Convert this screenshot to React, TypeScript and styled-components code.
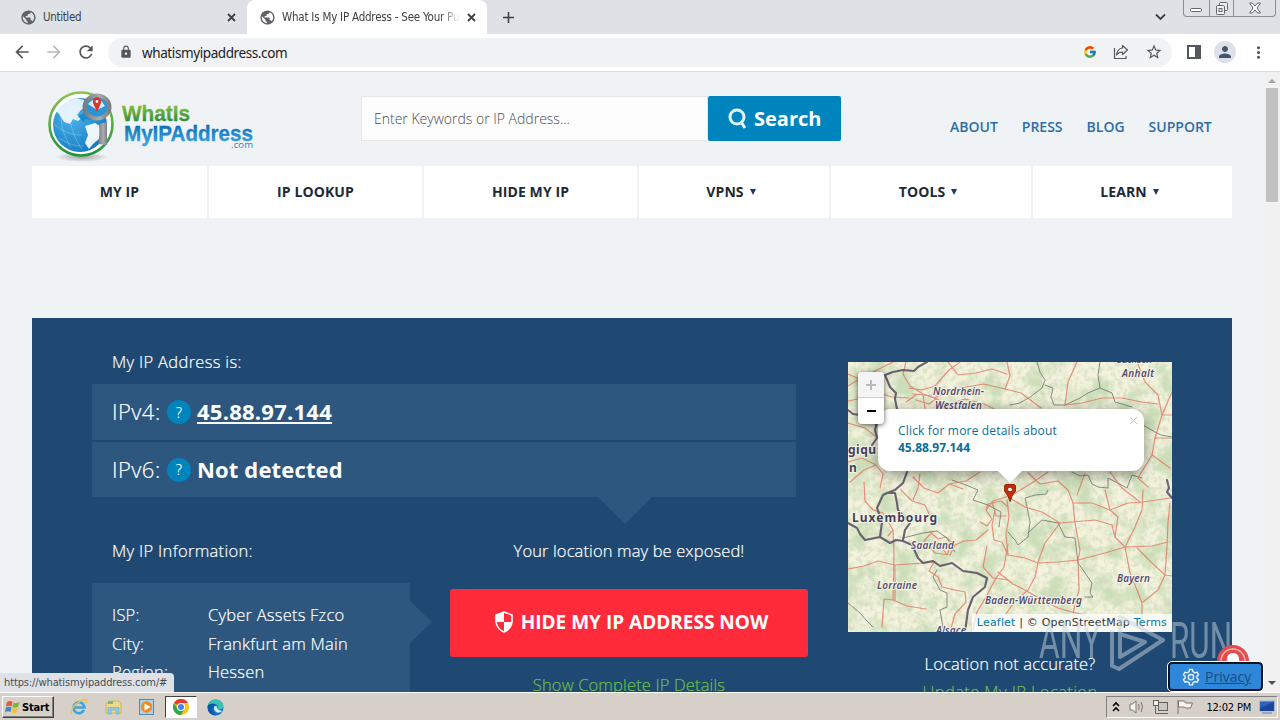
import React from 'react';
import styled, { createGlobalStyle } from 'styled-components';
import {
  MdAdd,
  MdArrowBack,
  MdArrowForward,
  MdLock,
  MdMoreVert,
  MdPerson,
  MdPublic,
  MdRefresh,
  MdStarBorder,
} from 'react-icons/md';
import { FcGoogle } from 'react-icons/fc';

const fontUi = `'DejaVu Sans Condensed', 'DejaVu Sans', sans-serif`;
const fontMain = `'Open Sans', 'Noto Sans', sans-serif`;

const GlobalStyle = createGlobalStyle`
  * {
    box-sizing: border-box;
  }
  body {
    margin: 0;
    overflow: hidden;
  }
  svg {
    display: block;
    flex-shrink: 0;
  }
`;

const Screen = styled.div`
  display: flex;
  flex-direction: column;
  width: 1280px;
  height: 720px;
  overflow: hidden;
  font-family: ${fontMain};
`;

/* Browser chrome */

const TabStrip = styled.div`
  display: flex;
  height: 34px;
  flex-shrink: 0;
  background: #dee1e6;
`;

const Tab = styled.div<{ $active?: boolean; $width: number }>`
  display: flex;
  align-items: center;
  width: ${props => props.$width}px;
  padding: 0 11px 0 ${props => (props.$active ? 12 : 20)}px;
  border-radius: 8px 8px 0 0;
  background: ${props => (props.$active ? '#fff' : 'transparent')};
  color: #3c4043;
`;

const TabTitle = styled.span<{ $spacing: number; $fade?: boolean }>`
  flex: 1;
  overflow: hidden;
  margin: 0 8px 0 6px;
  font: 11.5px ${fontUi};
  line-height: 16px;
  white-space: nowrap;
  letter-spacing: ${props => props.$spacing}px;
  ${props =>
    props.$fade &&
    'mask-image: linear-gradient(90deg, #000 158px, transparent 178px);'}
`;

const NewTab = styled.div`
  display: flex;
  align-items: center;
  margin-left: 12px;
  flex: 1;
  color: #3c4043;
`;

const TabSearch = styled.div`
  display: flex;
  align-items: center;
  margin-right: 17px;
  color: #3c4043;
`;

const WindowButtons = styled.div`
  display: flex;
  width: 93px;
  height: 17px;
  margin-right: 4px;
  border: 1px solid #8b8e95;
  border-top: 0;
  border-radius: 0 0 4px 4px;
`;

const WindowButton = styled.div<{ $width: number }>`
  display: flex;
  align-items: center;
  justify-content: center;
  width: ${props => props.$width}px;

  & + & {
    border-left: 1px solid #8b8e95;
  }
`;

const Toolbar = styled.div`
  display: flex;
  align-items: center;
  height: 38px;
  flex-shrink: 0;
  padding: 0 12px 1px 12px;
  border-bottom: 1px solid #d9dbde;
  background: #fff;
  color: #54575b;
`;

const NavIcons = styled.div`
  display: flex;
  gap: 12px;
  width: 96px;
`;

const AddressBar = styled.div`
  display: flex;
  align-items: center;
  width: 1064px;
  height: 29px;
  padding: 0 9px 0 11px;
  border-radius: 15px;
  background: #f0f2f4;
`;

const Url = styled.span`
  flex: 1;
  margin-left: 9px;
  padding-top: 1px;
  color: #202124;
  font: 13.5px 'Noto Sans', sans-serif;
  letter-spacing: -0.4px;
`;

const AddressActions = styled.div`
  display: flex;
  align-items: center;
  gap: 16px;
`;

const ToolbarActions = styled.div`
  display: flex;
  align-items: center;
  justify-content: space-between;
  flex: 1;
  margin-left: 15px;
`;

const Avatar = styled.div`
  display: flex;
  align-items: center;
  justify-content: center;
  width: 22px;
  height: 22px;
  border-radius: 50%;
  background: #dde2ea;
  color: #46546b;
`;

/* Page */

const Viewport = styled.div`
  position: relative;
  display: flex;
  height: 620px;
  flex-shrink: 0;
  overflow: hidden;
`;

const Page = styled.div`
  width: 1264px;
  height: 620px;
  overflow: hidden;
  padding: 0 32px;
  background: #f0f3f5;
`;

const Scrollbar = styled.div`
  display: flex;
  flex-direction: column;
  align-items: center;
  width: 16px;
  height: 620px;
  padding: 6px 0;
  background: #f1f1f1;
`;

const Thumb = styled.div`
  width: 12px;
  height: 114px;
  margin: 4px 0 auto;
  background: #c1c1c1;
`;

const Header = styled.header`
  display: flex;
  height: 94px;
`;

const LogoWrap = styled.div`
  width: 329px;
  padding: 14px 0 0 10px;
`;

const SearchForm = styled.div`
  display: flex;
  width: 480px;
  height: 45px;
  margin-top: 24px;
`;

const SearchInput = styled.div`
  display: flex;
  align-items: center;
  width: 347px;
  padding-left: 12px;
  border: 1px solid #e5e7e9;
  background: #fdfdfd;
  color: #4c4c4c;
  font-size: 14px;
  font-weight: 300;
`;

const SearchButton = styled.div`
  display: flex;
  align-items: center;
  width: 133px;
  gap: 7px;
  padding-left: 20px;
  border-radius: 2px;
  background: #0084bd;
  color: #fff;
  font-size: 20px;
  font-weight: 700;
`;

const TopLinks = styled.div`
  display: flex;
  gap: 24px;
  margin: 45px 0 0 109px;
  color: #2f6da6;
  font-size: 14px;
  font-weight: 600;
  line-height: 20px;
  white-space: nowrap;
`;

const MainNav = styled.nav`
  display: grid;
  grid-template-columns: 175px 213px 213px 190px 200px 199px;
  gap: 2px;
  height: 52px;
`;

const NavItem = styled.div<{ $menu?: boolean }>`
  display: flex;
  align-items: center;
  justify-content: center;
  gap: 6px;
  padding: 0 ${props => (props.$menu ? 6 : 0)}px 2px 0;
  background: #fff;
  color: #1c2936;
  font-size: 14px;
  font-weight: 700;
  letter-spacing: 0.1px;
`;

const Caret = styled.i`
  margin-top: 1px;
  border: 3px solid transparent;
  border-top: 6px solid #1f3a5c;
  border-bottom: 0;
`;

const Hero = styled.main`
  display: flex;
  gap: 40px;
  height: 374px;
  margin-top: 100px;
  padding: 32px 60px 0;
  background: #1f4972;
  color: #fff;
  font-weight: 300;
  -webkit-text-stroke: 0.2px;
`;

const Details = styled.section`
  width: 716px;
`;

const Heading = styled.div`
  height: 24px;
  padding-left: 20px;
  font-size: 16.5px;
  line-height: 24px;
  white-space: nowrap;
  letter-spacing: 0.32px;
`;

const Warning = styled.div`
  height: 24px;
  font-size: 16.5px;
  line-height: 24px;
  white-space: nowrap;
  letter-spacing: 0.12px;
`;

const IpList = styled.div`
  display: flex;
  flex-direction: column;
  gap: 2px;
  width: 704px;
  margin: 10px 0 42px;
`;

const IpRow = styled.div`
  display: flex;
  align-items: center;
  height: 56px;
  padding-left: 20px;
  background: #2d577e;
  font-size: 22px;

  & + & {
    height: 55px;
  }
`;

const IpLabel = styled.span`
  width: 55px;
  padding-bottom: 2px;
  letter-spacing: 0.45px;
`;

const Help = styled.span`
  display: flex;
  align-items: center;
  justify-content: center;
  width: 24px;
  height: 24px;
  margin-right: 6px;
  border-radius: 50%;
  background: #0084bd;
  font-size: 14px;
`;

const IpValue = styled.span<{ $link?: boolean }>`
  margin-bottom: ${props => (props.$link ? '1px' : '2px')};
  font-size: 22px;
  font-weight: 700;
  line-height: ${props => (props.$link ? '22px' : '24px')};
  letter-spacing: ${props => (props.$link ? 0.25 : 0.15)}px;
  border-bottom: ${props => (props.$link ? '2px solid #fff' : '0')};
  -webkit-text-stroke: 0;
`;

const Columns = styled.div`
  display: flex;
  gap: 40px;
`;

const Info = styled.div`
  width: 318px;
`;

const InfoTable = styled.div`
  position: relative;
  display: grid;
  grid-template-columns: 96px auto;
  align-content: start;
  height: 140px;
  margin-top: 20px;
  padding: 18px 20px;
  background: #2d577e;
  font-size: 16.5px;
  line-height: 28.5px;
  letter-spacing: 0.22px;
`;

const Arrow = styled.i<{ $down?: boolean }>`
  position: absolute;
  left: ${props => (props.$down ? '148px' : '318px')};
  top: ${props => (props.$down ? '-42px' : '18px')};
  border: ${props => (props.$down ? '27px' : '21px')} solid transparent;
  ${props =>
    props.$down
      ? 'border-top-color: #2d577e; border-bottom: 0;'
      : 'border-left: 22px solid #2d577e; border-right: 0;'}
`;

const Action = styled.div`
  position: relative;
  display: flex;
  flex-direction: column;
  align-items: center;
  width: 358px;
`;

const HideButton = styled.div`
  display: flex;
  align-items: center;
  justify-content: center;
  gap: 8px;
  width: 358px;
  height: 68px;
  margin: 26px 0 16px;
  padding: 0 0 2px 5px;
  border-radius: 3px;
  background: #ff2a3a;
  font-size: 19px;
  font-weight: 700;
  -webkit-text-stroke: 0;
`;

const GreenLink = styled.a<{ $spacing: number }>`
  color: #6cbf4b;
  font-size: 16.5px;
  line-height: 24px;
  text-decoration: underline;
  white-space: nowrap;
  letter-spacing: ${props => props.$spacing}px;
`;

const MapColumn = styled.aside`
  display: flex;
  flex-direction: column;
  align-items: center;
  width: 324px;
  padding-top: 12px;
  font-size: 16.5px;
  line-height: 28px;
`;

const Question = styled.span`
  margin-bottom: 2px;
  letter-spacing: 0.14px;
`;

const MapFrame = styled.div`
  position: relative;
  width: 324px;
  height: 270px;
  flex-shrink: 0;
  margin-bottom: 18px;
  overflow: hidden;
  -webkit-text-stroke: 0;
`;

const ZoomControl = styled.div`
  position: absolute;
  left: 10px;
  top: 10px;
  width: 26px;
  border-radius: 4px;
  background: #fff;
  box-shadow: 0 1px 5px rgba(0, 0, 0, 0.65);
`;

const ZoomButton = styled.div<{ $disabled?: boolean }>`
  display: flex;
  align-items: center;
  justify-content: center;
  height: 26px;
  border-radius: 4px 4px 0 0;
  border-bottom: ${props => (props.$disabled ? '1px solid #ccc' : '0')};
  background: ${props => (props.$disabled ? '#f4f4f4' : 'transparent')};
  color: ${props => (props.$disabled ? '#bbb' : '#000')};
`;

const Popup = styled.div`
  position: absolute;
  left: 30px;
  top: 47px;
  width: 266px;
  height: 62px;
  padding: 13px 20px;
  border-radius: 12px;
  background: #fff;
  box-shadow: 0 3px 14px rgba(0, 0, 0, 0.4);
  color: #0a6e97;
  font-size: 12px;
  font-weight: 400;
  line-height: 17px;
  letter-spacing: 0.18px;

  b {
    letter-spacing: 0;
  }

  &::after {
    content: '';
    position: absolute;
    left: 120px;
    top: 62px;
    border: 12px solid transparent;
    border-top-color: #fff;
    border-bottom: 0;
  }
`;

const PopupClose = styled.div`
  position: absolute;
  right: 6px;
  top: 7px;
  color: #c3c3c3;
`;

const Pin = styled.div`
  position: absolute;
  left: 156px;
  top: 122px;
`;

const Attribution = styled.div`
  position: absolute;
  right: 0;
  bottom: 0;
  height: 18px;
  padding: 0 5px;
  background: rgba(255, 255, 255, 0.75);
  color: #333;
  font: 11px/18px 'DejaVu Sans', sans-serif;
  letter-spacing: 0.18px;
  white-space: nowrap;

  span {
    color: #0078a8;
  }
`;

const Watermark = styled.div`
  position: absolute;
  left: 1036px;
  top: 538px;
`;

const Bell = styled.div`
  position: absolute;
  left: 1216px;
  top: 572px;
`;

const Privacy = styled.div`
  position: absolute;
  left: 1168px;
  top: 590px;
  display: flex;
  align-items: center;
  gap: 5px;
  width: 95px;
  height: 29px;
  padding-left: 12px;
  border: 2px solid #0b1220;
  border-radius: 4px;
  outline: 1px solid #fff;
  background: #2f87d9;
  color: #1c4a80;
  font-size: 14px;
  text-decoration: underline;
`;

const StatusBubble = styled.div`
  position: absolute;
  left: 0;
  bottom: 0;
  width: 174px;
  height: 19px;
  padding-left: 4px;
  border-radius: 0 4px 0 0;
  background: #dee1e6;
  color: #4a4d51;
  font: 11px/20px ${fontUi};
  letter-spacing: -0.12px;
  white-space: nowrap;
`;

/* Taskbar */

const Taskbar = styled.footer`
  display: flex;
  align-items: center;
  height: 28px;
  padding: 1px 2px 0;
  border-top: 1px solid #fff;
  background: #d6d0c8;
`;

const StartButton = styled.div`
  display: flex;
  align-items: center;
  gap: 2px;
  width: 52px;
  height: 22px;
  padding-left: 2px;
  border: 1px solid;
  border-color: #fff #404040 #404040 #fff;
  box-shadow: inset -1px -1px #808080;
  color: #000;
  font: bold 11px ${fontUi};
  letter-spacing: -0.15px;
`;

const QuickLaunch = styled.div`
  display: flex;
  flex: 1;
  align-items: center;
  margin-left: 8px;
`;

const TaskIcon = styled.div<{ $active?: boolean }>`
  display: flex;
  align-items: center;
  justify-content: center;
  width: ${props => (props.$active ? 32 : 34)}px;
  height: 22px;
  margin: 0 ${props => (props.$active ? 1 : 0)}px;
  border: 1px solid;
  border-color: ${props =>
    props.$active ? '#404040 #fff #fff #404040' : 'transparent'};
  background: ${props => (props.$active ? '#fff' : 'transparent')};
`;

const Tray = styled.div`
  display: flex;
  align-items: center;
  width: 172px;
  height: 22px;
  padding: 0 2px 0 5px;
  border: 1px solid;
  border-color: #808080 #fff #fff #808080;
`;

const TrayIcons = styled.div`
  display: flex;
  gap: 8px;
  margin-left: 9px;
`;

const Clock = styled.span`
  margin: 0 8px 0 auto;
  color: #000;
  font: 11px ${fontUi};
  letter-spacing: -0.2px;
  white-space: nowrap;
`;

const CloseIcon = () => (
  <svg width='9' height='9' fill='none' stroke='#3c4043' strokeWidth='1.8'>
    <path d='M1 1 L8 8 M8 1 L1 8' />
  </svg>
);

const Logo = () => (
  <svg width='215' height='80' viewBox='0 0 215 80'>
    <defs>
      <linearGradient id='ring' x1='0' y1='0' x2='0' y2='1'>
        <stop offset='0' stopColor='#8cc152' />
        <stop offset='1' stopColor='#1e9440' />
      </linearGradient>
      <radialGradient id='sea' cx='.35' cy='.35' r='.8'>
        <stop offset='0' stopColor='#4eb4ea' />
        <stop offset='1' stopColor='#0c74bd' />
      </radialGradient>
      <linearGradient id='greenText' x1='0' y1='0' x2='0' y2='1'>
        <stop offset='.2' stopColor='#7fb93c' />
        <stop offset='.8' stopColor='#2f8f3c' />
      </linearGradient>
      <linearGradient id='blueText' x1='0' y1='0' x2='0' y2='1'>
        <stop offset='.2' stopColor='#0b6fb8' />
        <stop offset='.9' stopColor='#3ba3e0' />
      </linearGradient>
      <linearGradient id='steel'>
        <stop offset='0' stopColor='#777a80' />
        <stop offset='.6' stopColor='#a9abb0' />
        <stop offset='1' stopColor='#7c7e83' />
      </linearGradient>
      <radialGradient id='shade'>
        <stop offset='0' stopColor='#777' stopOpacity='.65' />
        <stop offset='1' stopColor='#777' stopOpacity='0' />
      </radialGradient>
    </defs>
    <ellipse cx='40' cy='71' rx='26' ry='5' fill='url(#shade)' />
    <circle cx='39' cy='38' r='31.5' fill='#fff' stroke='url(#ring)' strokeWidth='2.6' />
    <circle cx='38' cy='39' r='27' fill='url(#sea)' />
    <path
      d='M14 25 L22 16 L34 12 L42 14 L45 20 L39 24 L35 29 L40 32 L36 35 L31 33 L28 38 L22 36 L17 28Z'
      fill='#fff'
      opacity='.85'
    />
    <path d='M43 40 L53 37 L61 42 L58 52 L51 58 L47 63 L43 57 L46 49Z' fill='#fff' opacity='.92' />
    <path d='M36 30 l6 -3 l4 3 l5 1 l-2 3 l-5 -1 l-3 3z' fill='#168bd0' />
    <path
      d='M12 38 Q26 50 40 49 M17 52 Q30 61 42 60 M20 22 Q16 42 29 62 M29 17 Q24 40 40 64'
      fill='none'
      stroke='#fff'
      strokeOpacity='.35'
      strokeWidth='.7'
    />
    <path d='M57 38 l8 -2 v23 l-9 -1 q2 -8 1 -20z' fill='url(#steel)' />
    <ellipse cx='55' cy='21' rx='12.500' ry='11.500' fill='#2c93d4' stroke='url(#steel)' strokeWidth='4' />
    <path d='M46 18 q7 -7 12 -5 l5 7 l-8 4z' fill='#d7effa' />
    <path d='M55 26 l-4 -9 q-1 -5 4 -6 q5 1 4 6z' fill='#e0312c' />
    <circle cx='55' cy='15.500' r='1.4' fill='#fff' />
    <text
      x='80'
      y='35'
      textLength='68'
      lengthAdjust='spacingAndGlyphs'
      fill='url(#greenText)'
      stroke='url(#greenText)'
      strokeWidth='.3'
      fontFamily='Liberation Sans, sans-serif'
      fontSize='21.5'
      fontWeight='700'
    >
      WhatIs
    </text>
    <text
      x='82'
      y='54.500'
      textLength='129'
      lengthAdjust='spacingAndGlyphs'
      fill='url(#blueText)'
      stroke='url(#blueText)'
      strokeWidth='.3'
      fontFamily='Liberation Sans, sans-serif'
      fontSize='22.5'
      fontWeight='700'
    >
      MyIPAddress
    </text>
    <text x='189' y='61.5' textLength='22' fill='#1b82c5' fontFamily={fontMain} fontSize='9.5'>
      .com
    </text>
  </svg>
);

// path data for the map layers, in map pixels
const motorways = [
  'M159 138 L161 155 L158 172 L160 193 L177 196 L190 201 L210 200 L230 198 L257 191 L277 185 L304 184 L320 180',
  'M190 201 L187 215 L180 228 L166 240 L158 252',
  'M190 200 L197 181 L212 161 L224 160 L247 158 L264 163 L267 175 L277 185',
  'M220 128 L225 141 L227 161 L232 188 L230 198 L231 228 L225 251',
  'M225 141 L244 141 L262 148 L280 141 L295 140 L322 136',
  'M257 128 L262 148 L270 155 L267 175',
  'M295 128 L294 148 L287 165 L277 185 L282 211 L289 228 L294 241 L294 270',
  'M289 186 L304 201 L317 213 L324 214 M317 213 L310 228 L295 240',
  'M322 141 L320 160 L319 185 L317 213',
  'M150 210 L165 222 L177 228 L194 238 L210 246 L224 250 L237 253',
  'M160 135 L177 145 L194 150 L212 161',
  'M229 0 L220 20 L217 43 L234 41 L254 36 L274 36 L294 40 L310 42',
  'M289 0 L297 20 L310 33 L314 53 L307 76 L304 93 L290 116',
  'M324 30 L314 53 L324 53 M307 76 L324 76 M304 93 L322 106',
  'M200 110 L184 121 L164 133 L145 139 L138 148',
  'M237 111 L229 133 M262 110 L274 126 L292 140 M290 116 L300 125',
  'M180 111 L192 122 L210 119 L220 128',
  'M159 0 L162 14 L157 27 L173 31 L193 46',
  'M0 24 L15 15 L35 5 L45 0 M0 12 L14 18 L30 31 L44 35 L61 36',
  'M58 0 L55 12 L62 24 L75 32 L86 36 L101 29 L118 25 L136 22 L157 27',
  'M61 26 L74 28 L87 24 L101 8 L112 0 M75 32 L77 47',
  'M65 32 L85 34 L94 31 M68 38 L81 42 L89 36 M58 40 L68 33',
  'M86 36 L100 42 L117 37 L136 42 L148 48',
  'M100 0 L110 13 L128 11 L144 7 L159 12',
  'M0 39 L14 36 L24 46 L30 62 M0 61 L17 66 L27 74',
  'M0 100 L14 96 L28 103 L35 112 L32 126 M2 120 L16 108 L28 103',
  'M16 120 L17 139 L25 148 L35 151 L45 168 L46 190 L45 238',
  'M65 115 L76 126 L90 131 L101 122 L118 119 L132 110 M101 122 L115 127',
  'M53 128 L64 139 L77 143 L82 154 M72 112 L70 126 L65 138',
  'M0 207 L16 204 L30 199 L47 203 L75 201 L86 200 M45 168 L40 174',
  'M46 238 L36 237 L34 265 M45 238 L59 244 L78 247 M47 203 L47 238',
  'M82 170 L90 177 L98 175 L107 183 L116 179 L128 178 L140 168 M84 170 L76 179 L87 191 L102 193 L107 183 M79 182 L91 181 L99 193 L104 180',
  'M86 200 L81 209 L90 215 L94 225 L107 228 L117 230 L118 240 L107 252 L102 270',
  'M138 148 L140 142 L153 139 L160 145 M144 140 L148 154 L158 154 M138 148 L144 157 L139 164 L132 160',
  'M147 148 L144 163 L146 178 L154 180 L160 193 M139 184 L135 205 L145 216 L160 218',
  'M160 182 L156 205 L148 216 L138 235 L129 250 L125 268',
];

const borders = [
  'M79 0 L70 5 L66 9 L55 8 L45 10 L37 13 L42 25 L48 31 L47 37 L49 47 L55 55',
  'M0 48 L5 52 L12 53 M29 60 L27 68 L29 76 L24 83',
  'M59 110 L55 121 L47 128 L39 131 L35 133 L29 146 L34 160 L32 175',
  'M39 131 L47 131 L49 141 L50 148 L62 161 L57 168 L55 178',
  'M0 161 L9 166 L12 172 L17 178 L32 175 L42 181 L48 178 L55 179 L64 183 L70 196 L75 201 L85 199 L92 204 L104 201 L115 209 L129 211 L139 216 L137 225 L125 235 L120 248 L117 270',
  'M319 118 L321 126 L319 130 L324 136',
];

const stateLines = [
  'M189 0 L192 10 L197 18 L194 26 L182 35 L172 41 L162 43',
  'M197 23 L205 26 L203 35 L206 43 L217 43 L232 36 L240 31 L252 26 L250 13 L252 0',
  'M252 26 L264 31 L267 40 L284 45 M295 63 L307 70 L313 73 L324 75',
  'M224 110 L232 114 L240 113 L244 122 L250 125 L260 126 L260 116 L279 126 L284 113 L294 116',
  'M200 128 L198 132 L187 133 L177 136 L179 145 L182 160 L180 175 L170 183 L167 178 L160 170',
  'M180 171 L194 158 L210 161 L217 175 L227 176 L230 201 L235 208 L244 221 L242 231 L245 235 L237 235',
  'M0 241 L12 251 L18 258 L25 265',
  'M89 208 L85 215 L92 228 L99 231 L99 245 L92 248 L95 265',
  'M55 176 L75 171 L89 169 L99 176 L107 190',
  'M104 118 L118 123 L130 128 L125 138 L140 143 L153 150 L151 165',
];

const MapTiles = () => (
  <svg width='324' height='270' viewBox='0 0 324 270'>
    <defs>
      <filter id='forest' x='0' y='0' width='100%' height='100%' colorInterpolationFilters='sRGB'>
        <feTurbulence type='fractalNoise' baseFrequency='.045' numOctaves='5' seed='8' />
        <feColorMatrix values='0 0 0 0 .7  0 0 0 0 .83  0 0 0 0 .64  0 3.5 0 0 -1.5' />
      </filter>
      <filter id='fields' x='0' y='0' width='100%' height='100%' colorInterpolationFilters='sRGB'>
        <feTurbulence type='fractalNoise' baseFrequency='.2' numOctaves='3' seed='3' />
        <feColorMatrix values='0 0 0 0 .8  0 0 0 0 .85  0 0 0 0 .73  0 0 5 0 -2.3' />
      </filter>
    </defs>
    <rect width='324' height='270' fill='#f3f2dc' />
    <rect width='324' height='270' filter='url(#forest)' opacity='.6' />
    <rect width='324' height='270' filter='url(#fields)' opacity='.5' />
    <g fill='none' strokeLinejoin='round' strokeLinecap='round'>
      <g stroke='#555d58' strokeWidth='.9' opacity='.75'>
        {stateLines.map(d => (
          <path key={d} d={d} />
        ))}
      </g>
      <g stroke='#e5705e' strokeWidth='1.2' opacity='.75'>
        {motorways.map(d => (
          <path key={d} d={d} />
        ))}
      </g>
      <g stroke='#5d5468' strokeWidth='2.1' opacity='.9'>
        {borders.map(d => (
          <path key={d} d={d} />
        ))}
      </g>
    </g>
    <g
      fill='#534a70'
      stroke='#f4f5e4'
      strokeWidth='2'
      paintOrder='stroke'
      fontFamily='Noto Sans, sans-serif'
      fontStyle='italic'
      fontWeight='600'
      fontSize='10'
    >
      <text x='85' y='33' textLength='51'>Nordrhein-</text>
      <text x='87' y='47' textLength='47'>Westfalen</text>
      <text x='269' y='1' textLength='38'>Sachsen-</text>
      <text x='274' y='15' textLength='32'>Anhalt</text>
      <text x='63' y='187' textLength='43'>Saarland</text>
      <text x='29' y='227' textLength='40'>Lorraine</text>
      <text x='269' y='220' textLength='33'>Bayern</text>
      <text x='137' y='242' textLength='97'>Baden-Württemberg</text>
      <text x='88' y='272' textLength='30'>Alsace</text>
    </g>
    <g
      fill='#463e60'
      stroke='#f4f5e4'
      strokeWidth='2'
      paintOrder='stroke'
      fontFamily='Noto Sans, sans-serif'
      fontWeight='700'
      fontSize='12'
    >
      <text x='4' y='160' textLength='85'>Luxembourg</text>
      <text x='0' y='92' textLength='28'>giqu</text>
      <text x='1' y='110'>n</text>
    </g>
  </svg>
);

const LocationMap = () => (
  <MapFrame>
    <MapTiles />
    <Pin>
      <svg width='12' height='18' viewBox='0 0 12 18'>
        <path d='M1.500 .5 h9 l1 1.500 v5 l-3.500 5 l-2 5.500 l-2 -5.500 l-3.500 -5 v-5z' fill='#cc2b0c' stroke='#992208' />
        <circle cx='6' cy='5.500' r='2.400' fill='#fff' stroke='#8a1f05' />
      </svg>
    </Pin>
    <Popup>
      Click for more details about
      <br />
      <b>45.88.97.144</b>
      <PopupClose>
        <svg width='9' height='9' viewBox='0 0 9 9' stroke='currentColor'>
          <path d='M1 1 L8 8 M8 1 L1 8' />
        </svg>
      </PopupClose>
    </Popup>
    <ZoomControl>
      <ZoomButton $disabled>
        <svg width='10' height='10' stroke='currentColor' strokeWidth='2'>
          <path d='M5 0 V10 M0 5 H10' />
        </svg>
      </ZoomButton>
      <ZoomButton>
        <svg width='10' height='10' stroke='currentColor' strokeWidth='2'>
          <path d='M1 5 H10' />
        </svg>
      </ZoomButton>
    </ZoomControl>
    <Attribution>
      <span>Leaflet</span> | © OpenStreetMap <span>Terms</span>
    </Attribution>
  </MapFrame>
);

const navItems = [
  { label: 'MY IP' },
  { label: 'IP LOOKUP' },
  { label: 'HIDE MY IP' },
  { label: 'VPNS', menu: true },
  { label: 'TOOLS', menu: true },
  { label: 'LEARN', menu: true },
];

const Browser = () => (
  <>
    <TabStrip>
      <Tab $width={247}>
        <MdPublic size={17} color='#5f6368' />
        <TabTitle $spacing={-0.35}>Untitled</TabTitle>
        <CloseIcon />
      </Tab>
      <Tab $width={240} $active>
        <MdPublic size={17} color='#5f6368' />
        <TabTitle $spacing={-0.22} $fade>
          What Is My IP Address - See Your Public
        </TabTitle>
        <CloseIcon />
      </Tab>
      <NewTab>
        <MdAdd size={19} />
      </NewTab>
      <TabSearch>
        <svg width='11' height='8' fill='none' stroke='currentColor' strokeWidth='1.8'>
          <path d='M1 1.500 L5.500 6 L10 1.500' />
        </svg>
      </TabSearch>
      <WindowButtons>
        <WindowButton $width={25}>
          <svg width='14' height='16' fill='#fff' stroke='#62666d'>
            <rect x='1.5' y='8.5' width='11' height='3' rx='1' />
          </svg>
        </WindowButton>
        <WindowButton $width={25}>
          <svg width='14' height='15' fill='#eef0f3' stroke='#62666d'>
            <rect x='4.5' y='1.5' width='8' height='8' rx='1' />
            <rect x='1.5' y='4.5' width='8' height='9' rx='1' />
            <rect x='4' y='7.5' width='3' height='3' />
          </svg>
        </WindowButton>
        <WindowButton $width={42}>
          <svg width='14' height='14' fill='#fff' stroke='#62666d'>
            <path d='M1.5 2 h3 l2.5 3 l2.5 -3 h3 l-3.5 5 l3.5 5 h-3 l-2.5 -3 l-2.5 3 h-3 l3.5 -5z' />
          </svg>
        </WindowButton>
      </WindowButtons>
    </TabStrip>
    <Toolbar>
      <NavIcons>
        <MdArrowBack size={20} />
        <MdArrowForward size={20} color='#b6b8ba' />
        <MdRefresh size={20} />
      </NavIcons>
      <AddressBar>
        <MdLock size={14} />
        <Url>whatismyipaddress.com</Url>
        <AddressActions>
          <FcGoogle size={14} />
          <svg width='16' height='16' fill='none' stroke='currentColor' strokeWidth='1.2'>
            <path d='M1.5 4 V14.5 H13 V12' />
            <path d='M9.5 1.5 L14.5 6 L9.5 10.5 V8 Q5.5 8 3.5 11 Q4.5 4.5 9.5 4z' strokeLinejoin='round' />
          </svg>
          <MdStarBorder size={18} />
        </AddressActions>
      </AddressBar>
      <ToolbarActions>
        <svg width='14' height='14' fill='none' stroke='currentColor' strokeWidth='2'>
          <rect x='1' y='1' width='12' height='12' />
          <rect x='9' y='1' width='4' height='12' fill='currentColor' />
        </svg>
        <Avatar>
          <MdPerson size={18} />
        </Avatar>
        <MdMoreVert size={19} />
      </ToolbarActions>
    </Toolbar>
  </>
);

const Website = () => (
  <Page>
    <Header>
      <LogoWrap>
        <Logo />
      </LogoWrap>
      <SearchForm>
        <SearchInput>Enter Keywords or IP Address...</SearchInput>
        <SearchButton>
          <svg width='19' height='22' fill='none' stroke='#e4f6fd' strokeWidth='3'>
            <circle cx='9' cy='9' r='7' />
            <path d='M13 14 L17 20' />
          </svg>
          Search
        </SearchButton>
      </SearchForm>
      <TopLinks>
        <span>ABOUT</span>
        <span>PRESS</span>
        <span>BLOG</span>
        <span>SUPPORT</span>
      </TopLinks>
    </Header>
    <MainNav>
      {navItems.map(item => (
        <NavItem key={item.label} $menu={item.menu}>
          {item.label}
          {item.menu && <Caret />}
        </NavItem>
      ))}
    </MainNav>
    <Hero>
      <Details>
        <Heading>My IP Address is:</Heading>
        <IpList>
          <IpRow>
            <IpLabel>IPv4:</IpLabel>
            <Help>?</Help>
            <IpValue $link>45.88.97.144</IpValue>
          </IpRow>
          <IpRow>
            <IpLabel>IPv6:</IpLabel>
            <Help>?</Help>
            <IpValue>Not detected</IpValue>
          </IpRow>
        </IpList>
        <Columns>
          <Info>
            <Heading>My IP Information:</Heading>
            <InfoTable>
              <span>ISP:</span>
              <span>Cyber Assets Fzco</span>
              <span>City:</span>
              <span>Frankfurt am Main</span>
              <span>Region:</span>
              <span>Hessen</span>
              <Arrow />
            </InfoTable>
          </Info>
          <Action>
            <Arrow $down />
            <Warning>Your location may be exposed!</Warning>
            <HideButton>
              <svg width='18' height='22' viewBox='0 0 18 22'>
                <path d='M9 1 L17 4 V11 Q16 18 9 21 Q2 18 1 11 V4Z' fill='none' stroke='#fff' strokeWidth='1.6' />
                <path d='M9 1 L1 4 V11 H9Z M9 11 H17 Q16 18 9 21Z' fill='#fff' />
              </svg>
              HIDE MY IP ADDRESS NOW
            </HideButton>
            <GreenLink $spacing={0.15}>Show Complete IP Details</GreenLink>
          </Action>
        </Columns>
      </Details>
      <MapColumn>
        <LocationMap />
        <Question>Location not accurate?</Question>
        <GreenLink $spacing={0.4}>Update My IP Location</GreenLink>
      </MapColumn>
    </Hero>
  </Page>
);

const WindowsTaskbar = () => (
  <Taskbar>
    <StartButton>
      <svg width='15' height='14' viewBox='0 0 15 14'>
        <path d='M2 2 Q5 0 7.500 2 L6.500 6.500 Q4 5 1 6.500Z' fill='#e8562a' />
        <path d='M8.500 2.500 Q11 4 14.500 2 L13 7 Q10 8.500 7.500 7Z' fill='#7cb53a' />
        <path d='M1 7.500 Q4 6 6.500 7.500 L5.500 12 Q3 10.500 0 12Z' fill='#3b84d3' />
        <path d='M7.500 8 Q10 9.500 13 8 L11.500 12.500 Q9 14 6.500 12.500Z' fill='#f5c12c' />
      </svg>
      Start
    </StartButton>
    <QuickLaunch>
      <TaskIcon>
        <svg width='18' height='18' viewBox='0 0 18 18' fill='none'>
          <path d='M14 12 A5.500 5.500 0 1 1 14.500 9.500 H5' stroke='#3ca4df' strokeWidth='2.600' />
          <path d='M2 16 Q-1 13 6 6 Q14 0 16.500 2 Q17.500 3 16 5.500' stroke='#efc345' strokeWidth='1.400' />
        </svg>
      </TaskIcon>
      <TaskIcon>
        <svg width='17' height='16' viewBox='0 0 17 16'>
          <path d='M1 4 h4 l1 -2 h8 l2 3 v9 H1Z' fill='#f1d98a' stroke='#d2b45c' />
          <path d='M3 2 h5 v3 H3z' fill='#7fb86b' />
          <path d='M3 15 V8.500 H14 V15 H11 V11 H6 V15Z' fill='#8fcbe9' stroke='#65a7cb' strokeWidth='.6' />
        </svg>
      </TaskIcon>
      <TaskIcon>
        <svg width='16' height='16' viewBox='0 0 16 16'>
          <rect x='.5' y='.5' width='14' height='15' fill='#a8d2ee' stroke='#4a8dbd' />
          <circle cx='7.500' cy='8' r='5.700' fill='#f28a1c' />
          <path d='M5.500 4.500 L11.500 8 L5.500 11.500Z' fill='#fff' />
        </svg>
      </TaskIcon>
      <TaskIcon $active>
        <svg width='16' height='16' viewBox='0 0 16 16'>
          <circle cx='8' cy='8' r='8' fill='#fbc116' />
          <path d='M8 8 L1.070 4 A8 8 0 0 1 14.930 4 H8Z' fill='#e33b2e' />
          <path d='M8 8 L4.540 10 L1.070 4 A8 8 0 0 0 8 16 L11.460 10Z' fill='#2da94f' />
          <circle cx='8' cy='8' r='4' fill='#fff' />
          <circle cx='8' cy='8' r='3' fill='#4285f4' />
        </svg>
      </TaskIcon>
      <TaskIcon>
        <svg width='17' height='17' viewBox='0 0 17 17'>
          <circle cx='8.500' cy='8.500' r='8' fill='#1470c4' />
          <path d='M.6 8 Q1 1 8.500 .5 Q16 1 16.500 7 Q16 11 11 10.500 Q12 7 8.500 5 Q4 3.500 .6 8Z' fill='#39c1b5' />
          <path d='M7 8 Q8 6.500 10 7.500 Q9.500 11 15.500 12 Q12 15 9 13 Q6.500 11 7 8Z' fill='#d6e7ee' />
          <path d='M1 6 Q5 3 9 6 Q4 7 5.500 12 Q6.500 15.500 9 16.500 Q1 16 .5 8Z' fill='#0c59a4' />
        </svg>
      </TaskIcon>
    </QuickLaunch>
    <Tray>
      <svg width='8' height='14' fill='none' stroke='#000' strokeWidth='1.600'>
        <path d='M1 6 L4 3 L7 6 M1 11 L4 8 L7 11' />
      </svg>
      <TrayIcons>
        <svg width='16' height='16' fill='#f5f3ef' stroke='#77746f'>
          <path d='M1 5 H3.500 L7 2 V14 L3.500 11 H1Z' />
          <path d='M9.500 5 Q11 8 9.500 11 M12 3 Q15 8 12 13' fill='none' />
        </svg>
        <svg width='16' height='16' fill='#f1efea' stroke='#66635e'>
          <rect x='5.500' y='3.500' width='9' height='8' fill='#c9c8c4' />
          <path d='M5 14.500 H15 M2.500 7 V14.500 H6' fill='none' />
          <rect x='.5' y='1.500' width='5' height='5' />
        </svg>
        <svg width='17' height='16' fill='#f7f5f1' stroke='#77746f'>
          <path d='M1 1 V15' />
          <path d='M1.500 2 H7.500 L8.500 4 H15.500 L13.500 9 H8.500 L7.500 8 H1.500Z' />
        </svg>
      </TrayIcons>
      <Clock>12:02 PM</Clock>
      <svg width='16' height='15' viewBox='0 0 16 15'>
        <rect x='.5' y='1' width='15' height='10' fill='#2c62bd' stroke='#9fb7de' />
        <path d='M1 8 L15 2 V11 H1Z' fill='#1b4796' />
        <path d='M3 13 h10' stroke='#5d82bf' />
      </svg>
    </Tray>
  </Taskbar>
);

export default function App() {
  return (
    <Screen>
      <GlobalStyle />
      <Browser />
      <Viewport>
        <Website />
        <Scrollbar>
          <svg width='8' height='6'>
            <path d='M0 5 L4 1 L8 5Z' fill='#a3a3a3' />
          </svg>
          <Thumb />
          <svg width='8' height='6'>
            <path d='M0 1 L4 5 L8 1Z' fill='#505050' />
          </svg>
        </Scrollbar>
        <Watermark>
          <svg width='200' height='70' opacity='.5'>
            <g fill='#c9d3de' fontFamily='Roboto, sans-serif' fontSize='50' fontWeight='400'>
              <text x='3' y='48' textLength='62' lengthAdjust='spacingAndGlyphs'>ANY</text>
              <text x='134' y='48' textLength='62' lengthAdjust='spacingAndGlyphs'>RUN</text>
            </g>
            <path
              d='M84 35 V7 L127 30 L83 59 L76 56 V20 M84 24 L109 32 L84 47 V35'
              fill='none'
              stroke='#c9d3de'
              strokeWidth='4'
              strokeLinejoin='round'
            />
          </svg>
        </Watermark>
        <Bell>
          <svg width='34' height='34'>
            <circle cx='17' cy='17' r='16' fill='#e54b4d' />
            <circle cx='17' cy='17' r='12' fill='none' stroke='#f4b4b4' strokeWidth='1.500' />
            <path d='M10 20 Q11 18 11 14 Q12 9 17 9 Q22 9 23 14 Q23 18 24 20Z' fill='#fff' />
          </svg>
        </Bell>
        <Privacy>
          <svg width='18' height='18' viewBox='0 0 24 24' fill='none' stroke='#e8f3ff' strokeWidth='1.800'>
            <path
              d='M10 2 h4 l.6 3 l2.600 1.500 l2.900 -1 l2 3.500 l-2.300 2 v2.500 l2.300 2 l-2 3.500 l-2.900 -1 l-2.600 1.500 l-.6 3 h-4 l-.6 -3 l-2.600 -1.500 l-2.900 1 l-2 -3.500 l2.300 -2 v-2.500 l-2.300 -2 l2 -3.500 l2.900 1 l2.600 -1.500z'
              strokeLinejoin='round'
            />
            <circle cx='12' cy='12.200' r='3.500' />
          </svg>
          Privacy
        </Privacy>
        <StatusBubble>https://whatismyipaddress.com/#</StatusBubble>
      </Viewport>
      <WindowsTaskbar />
    </Screen>
  );
}
